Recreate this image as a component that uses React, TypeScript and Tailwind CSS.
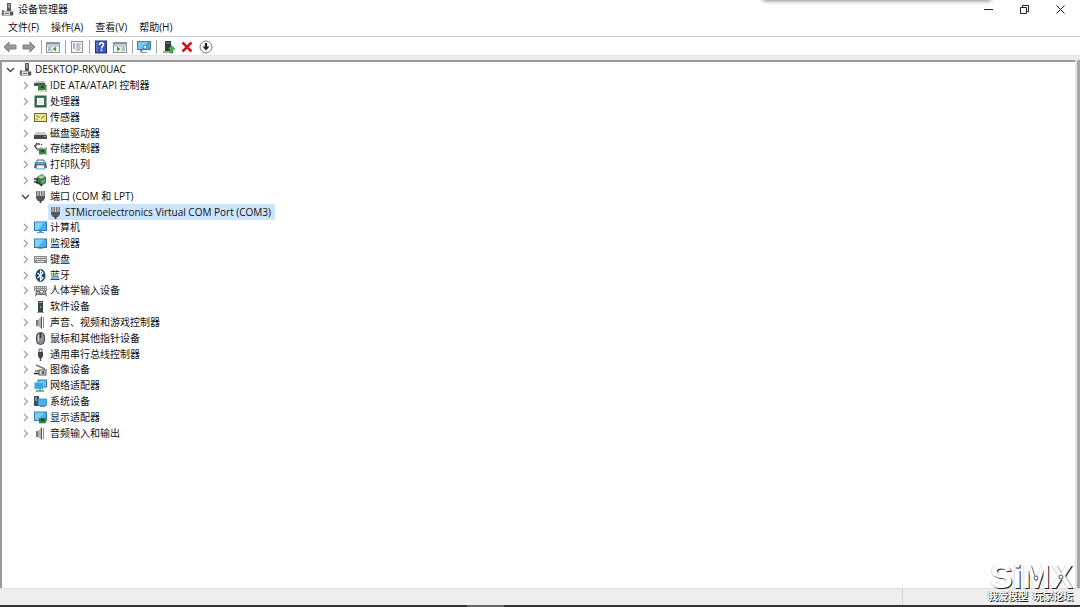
import { useState } from 'react';
import type { ReactNode } from 'react';

interface Device {
  label: string;
  icon: keyof typeof icons;
  level: 0 | 1 | 2;
  open?: boolean;
}

const icons = {
  root: (
    <>
      <rect x="6" y="0" width="4" height="8" fill="#5a5a5a" />
      <rect x="7" y="1" width="2" height="4" fill="#999" />
      <path d="M1 12.500V8.500h11v4z" fill="#e2e2e2" stroke="#999" strokeWidth=".8" />
      <rect x="1" y="7" width="2" height="5" fill="#777" />
      <rect x="9" y="9" width="3" height="3" fill="#555" />
      <path d="M4 10.500h4" stroke="#666" />
    </>
  ),
  ide: (
    <>
      <path d="M2 2h8l2 3H0z" fill="#c2c2c2" />
      <rect x="0" y="4" width="11" height="3" fill="#555" />
      <rect x="4" y="6" width="8" height="5" fill="#2f8b43" />
      <rect x="7" y="7" width="3" height="2" fill="#174b24" />
      <path d="M5 11v2M7 11v2M9 11v2" stroke="#b79a2d" />
      <path d="M12 5v8" stroke="#777" />
    </>
  ),
  cpu: (
    <>
      <rect x="0.500" y="0.500" width="12" height="12" fill="#2c6843" />
      <rect x="2" y="2" width="9" height="9" fill="#456f56" />
      <rect x="3" y="3" width="7" height="7" fill="#fff" />
      <rect x="4" y="4" width="5" height="5" fill="#e8ece9" />
    </>
  ),
  sensor: (
    <>
      <rect x="0.500" y="2.500" width="12" height="8" fill="#f0e69a" stroke="#6f682b" />
      <path d="M2 5h2v1h2M11 5H9v2H7M2 8h2" stroke="#9c9030" fill="none" />
    </>
  ),
  disk: (
    <>
      <path d="M2 5h9l2 3H0z" fill="#c9c9c9" />
      <rect x="0" y="8" width="13" height="4" rx=".5" fill="#4a4a4a" />
      <rect x="10" y="9" width="2" height="1" fill="#5bd26a" />
    </>
  ),
  storage: (
    <>
      <path d="M6 2H3L1 4l2 3h3M2 1l1 1M0 4h2M7 3l1-1" stroke="#4d4d4d" strokeWidth="1.300" fill="none" />
      <path d="M3 7l4-2 5 2v2H3z" fill="#a5a5a5" />
      <rect x="5" y="7" width="7" height="5" fill="#2f8b43" />
      <rect x="7" y="8" width="3" height="2" fill="#17502a" />
      <path d="M6 12v1M8 12v1M12 5v8" stroke="#777" />
    </>
  ),
  printer: (
    <>
      <path d="M3 5V2h7v3" fill="#eee" stroke="#666" />
      <path d="M1 4h11l1 6H0z" fill="#58636a" />
      <rect x="2" y="4" width="9" height="2" fill="#56a7cf" />
      <path d="M3 7h7l1 4H2z" fill="#f8f8f8" stroke="#4c8ca7" strokeWidth=".8" />
    </>
  ),
  battery: (
    <>
      <path d="M3 3l5-3 4 3v6l-5 3-4-3z" fill="#347c40" />
      <path d="M4 3l4-2 3 2-4 2z" fill="#b5cbb8" />
      <path d="M7 7l4-2v3l-4 2z" fill="#60af68" />
      <path d="M0 5h3M0 8h3M3 4v5h2l3 3" stroke="#333" strokeWidth="1.400" fill="none" />
    </>
  ),
  port: (
    <>
      <path d="M2 1h9v7l-2 3H4L2 8z" fill="#7c7c7c" />
      <path d="M4 1v5M6.500 1v5M9 1v5" stroke="#d0d0d0" />
      <path d="M2 6h9v2l-2 3H4L2 8z" fill="#585858" />
      <path d="M6.500 10v3" stroke="#444" strokeWidth="2" />
    </>
  ),
  computer: (
    <>
      <rect x="0.500" y="1" width="12" height="8.500" fill="#48b1ed" stroke="#2a7ebc" />
      <path d="M1 1.500h9L4 9H1z" fill="#82d0fa" />
      <path d="M5 10h3v1h2v1H3v-1h2z" fill="#7297ae" />
    </>
  ),
  monitor: (
    <>
      <rect x="0.500" y="2" width="12" height="8.500" fill="#48b1ed" stroke="#34799f" />
      <path d="M1 2.500h9L4 10H1z" fill="#82d0fa" />
      <path d="M4 11.500h5" stroke="#8babbb" />
    </>
  ),
  keyboard: (
    <>
      <rect x="0" y="3" width="13" height="7" fill="#8a8a8a" />
      <path d="M1 4.500h11M1 6.500h11" stroke="#ececec" strokeDasharray="1.500 .5" />
      <path d="M3 8.500h7" stroke="#ddd" />
    </>
  ),
  bluetooth: (
    <>
      <ellipse cx="6.500" cy="6.500" rx="5" ry="6.500" fill="#164680" />
      <path d="M3.500 4L9 9l-2.500 2.500v-10L9 4 3.500 9" stroke="#fff" strokeWidth="1.100" fill="none" />
    </>
  ),
  hid: (
    <>
      <rect x="0" y="2" width="13" height="5" fill="#8f8f8f" />
      <path d="M1 3.500h11M1 5.500h11" stroke="#e4e4e4" strokeDasharray="1 1" />
      <path d="M1 13l1-6h4l1 2h1l1-2h3l1 6-2-2H3z" fill="#777" />
      <path d="M4 8v2M10 8v2" stroke="#eee" />
    </>
  ),
  software: (
    <>
      <rect x="4" y="1" width="5" height="11" fill="#3f4541" />
      <rect x="5" y="2" width="3" height="1" fill="#b1b8b3" />
      <rect x="6" y="6" width="1" height="2" fill="#68c56e" />
      <path d="M3 12.500h7" stroke="#999" />
    </>
  ),
  speaker: (
    <>
      <path d="M2 4h2v6H2z" fill="#777" />
      <path d="M4 4l4-4v13l-4-3z" fill="#b0b0b0" />
      <path d="M7 1l1-1v13l-1-1z" fill="#555" />
      <path d="M9.500 1v11" stroke="#8f8f8f" />
    </>
  ),
  mouse: (
    <>
      <rect x="2.500" y="0.500" width="8" height="12" rx="4" fill="#8a9199" stroke="#3d4247" />
      <path d="M6.500 1v5" stroke="#333" strokeWidth="1.500" />
      <path d="M4.500 3v6" stroke="#d9dde1" />
    </>
  ),
  usb: (
    <>
      <path d="M5 4V1h3v3" fill="#ddd" stroke="#666" />
      <path d="M4 4h5v4L8 10H5L4 8z" fill="#444" />
      <path d="M6.500 10v3" stroke="#555" strokeWidth="1.500" />
    </>
  ),
  imaging: (
    <>
      <path d="M2 2l9 4M1 8h5" stroke="#777" strokeWidth="1.500" />
      <path d="M0 10.500h6" stroke="#222" strokeWidth="1.500" />
      <rect x="5" y="7" width="7" height="5" fill="#ddd" stroke="#555" />
      <circle cx="9" cy="9.500" r="1.500" fill="#555" />
    </>
  ),
  network: (
    <>
      <rect x="4" y="1" width="8.500" height="7" fill="#64bfee" stroke="#347fa9" />
      <rect x="0.500" y="3.500" width="9" height="6.500" fill="#3ba6e4" stroke="#8dcdf0" strokeWidth=".7" />
      <path d="M2 12h8M6 10v2" stroke="#46a75e" strokeWidth="1.500" />
    </>
  ),
  system: (
    <>
      <rect x="0" y="1" width="5" height="10" fill="#3e4e59" />
      <path d="M1 3h2M1 5h2" stroke="#c4d1d8" />
      <rect x="4" y="4" width="8.500" height="6.500" fill="#48b1ed" stroke="#317fae" strokeWidth=".8" />
      <path d="M6 11.500h5" stroke="#789" />
    </>
  ),
  display: (
    <>
      <rect x="0.500" y="1" width="12" height="8.500" fill="#48b1ed" stroke="#347fa9" />
      <path d="M1 1.500h9L4 9H1z" fill="#7acbf6" />
      <rect x="5" y="7" width="7" height="5" fill="#2f8040" />
      <rect x="7" y="8" width="3" height="2" fill="#173f20" />
      <path d="M6 12v1M8 12v1M10 12v1" stroke="#b69b35" />
    </>
  ),
};

const devices: Device[] = [
  { label: 'DESKTOP-RKV0UAC', icon: 'root', level: 0, open: true },
  { label: 'IDE ATA/ATAPI 控制器', icon: 'ide', level: 1 },
  { label: '处理器', icon: 'cpu', level: 1 },
  { label: '传感器', icon: 'sensor', level: 1 },
  { label: '磁盘驱动器', icon: 'disk', level: 1 },
  { label: '存储控制器', icon: 'storage', level: 1 },
  { label: '打印队列', icon: 'printer', level: 1 },
  { label: '电池', icon: 'battery', level: 1 },
  { label: '端口 (COM 和 LPT)', icon: 'port', level: 1, open: true },
  { label: 'STMicroelectronics Virtual COM Port (COM3)', icon: 'port', level: 2 },
  { label: '计算机', icon: 'computer', level: 1 },
  { label: '监视器', icon: 'monitor', level: 1 },
  { label: '键盘', icon: 'keyboard', level: 1 },
  { label: '蓝牙', icon: 'bluetooth', level: 1 },
  { label: '人体学输入设备', icon: 'hid', level: 1 },
  { label: '软件设备', icon: 'software', level: 1 },
  { label: '声音、视频和游戏控制器', icon: 'speaker', level: 1 },
  { label: '鼠标和其他指针设备', icon: 'mouse', level: 1 },
  { label: '通用串行总线控制器', icon: 'usb', level: 1 },
  { label: '图像设备', icon: 'imaging', level: 1 },
  { label: '网络适配器', icon: 'network', level: 1 },
  { label: '系统设备', icon: 'system', level: 1 },
  { label: '显示适配器', icon: 'display', level: 1 },
  { label: '音频输入和输出', icon: 'speaker', level: 1 },
];

const indents = ['pl-[2px]', 'pl-[17px]', 'pl-[32px]'];

function Icon({ children }: { children: ReactNode }) {
  return (
    <svg viewBox="0 0 13 13" className="size-[13px] shrink-0" aria-hidden="true">
      {children}
    </svg>
  );
}

function DeviceRow({ device, selected, onSelect }: { device: Device; selected: boolean; onSelect: () => void }) {
  return (
    <li
      role="treeitem"
      aria-level={device.level + 1}
      aria-selected={selected}
      className={`flex min-h-0 items-center ${indents[device.level]}`}
    >
      {device.level < 2 ? (
        <button type="button" aria-label={`展开 ${device.label}`} className="flex w-[14px] shrink-0 pl-[2px]">
          <svg viewBox="0 0 9 9" className="size-[9px]" fill="none" aria-hidden="true">
            {device.open ? (
              <path d="M1 3l3.500 3.500L8 3" stroke="#404040" strokeWidth="1.300" />
            ) : (
              <path d="M3 1l3.500 3.500L3 8" stroke="#a0a0a0" strokeWidth="1.200" />
            )}
          </svg>
        </button>
      ) : (
        <span className="w-[14px] shrink-0" />
      )}
      <button
        type="button"
        onClick={onSelect}
        className={`flex h-full items-center gap-[3px] pr-1 pl-px whitespace-nowrap ${selected ? 'bg-[#cce4fc]' : ''}`}
      >
        <Icon>{icons[device.icon]}</Icon>
        <span>{device.label}</span>
      </button>
    </li>
  );
}

function ToolButton({ label, children }: { label: string; children: ReactNode }) {
  return (
    <button type="button" aria-label={label} className="flex h-4 w-[18px] items-center justify-center">
      <svg viewBox="0 0 14 14" className="size-[14px]" fill="none" aria-hidden="true">
        {children}
      </svg>
    </button>
  );
}

function Divider() {
  return (
    <span className="flex w-1 justify-center">
      <span className="h-[14px] w-px bg-[#a5a5a5]" />
    </span>
  );
}

function Toolbar() {
  return (
    <div role="toolbar" className="flex h-[19px] items-center gap-px border-b border-[#e4e4e4] pt-px pl-px">
      <ToolButton label="后退">
        <path d="M1 7l5-5v3h7v4H6v3z" fill="#999" stroke="#7f7f7f" />
      </ToolButton>
      <ToolButton label="前进">
        <path d="M13 7L8 2v3H1v4h7v3z" fill="#999" stroke="#7f7f7f" />
      </ToolButton>
      <Divider />
      <ToolButton label="显示/隐藏控制台树">
        <rect x="0.500" y="2.500" width="13" height="10" fill="#f4f5f5" stroke="#8d979d" />
        <path d="M1 3.500h12" stroke="#8299aa" strokeWidth="2" />
        <path d="M1 6h12M5 6v6" stroke="#a7b0b5" />
        <path d="M2 8h2M2 10h2" stroke="#557fa0" />
        <path d="M10 6.500v5L6.500 9z" fill="#3eaa3b" />
      </ToolButton>
      <Divider />
      <ToolButton label="属性">
        <rect x="1.500" y="1.500" width="11" height="11" fill="#f5f6f7" stroke="#8a9299" />
        <path d="M6 4h5M6 6h4M6 8h5M6 10h4" stroke="#8498aa" />
        <path d="M3 4h2M3 6h2M3 8h2" stroke="#527ba0" />
      </ToolButton>
      <Divider />
      <ToolButton label="帮助">
        <rect x="1.500" y="1" width="11" height="12" fill="#3d57b8" stroke="#27377d" />
        <path d="M3 2v10" stroke="#6f87d9" />
        <path d="M5.500 5c0-3 4-3 4-.5C9.500 6 7.500 6 7.500 8.500M7.500 9.500v1.700" stroke="#fff" strokeWidth="1.500" />
      </ToolButton>
      <ToolButton label="操作窗格">
        <rect x="0.500" y="2.500" width="13" height="10" fill="#f4f5f5" stroke="#8d979d" />
        <path d="M1 3.500h12" stroke="#8299aa" strokeWidth="2" />
        <path d="M1 6h12M9 6v6" stroke="#a7b0b5" />
        <path d="M10 8h2M10 10h2" stroke="#557fa0" />
        <path d="M4 6.500v5L7.500 9z" fill="#3eaa3b" />
      </ToolButton>
      <Divider />
      <ToolButton label="扫描检测硬件改动">
        <rect x="0.500" y="1.500" width="13" height="8" fill="#48a9dc" stroke="#4983a4" />
        <path d="M1 2h10L5 9H1z" fill="#79c9ef" />
        <path d="M4 12.500h6" stroke="#7898aa" />
        <circle cx="8" cy="7" r="2" fill="#c6e8f8" stroke="#5589a5" />
        <path d="M6.500 8.500L3 12" stroke="#597d92" strokeWidth="1.500" />
      </ToolButton>
      <Divider />
      <ToolButton label="更新驱动程序">
        <path d="M4 1h6v10H4z" fill="#333c36" />
        <path d="M5 3h4" stroke="#89948c" />
        <path d="M2 12h7" stroke="#888" strokeWidth="1.500" />
        <path d="M10.500 5.500L14 9h-2v4H9V9H7z" fill="#43b64b" stroke="#27833a" strokeWidth=".6" />
      </ToolButton>
      <ToolButton label="卸载设备">
        <path d="M2.500 2.500l9 9M11.500 2.500l-9 9" stroke="#c91520" strokeWidth="2.500" />
      </ToolButton>
      <ToolButton label="禁用设备">
        <circle cx="7" cy="7" r="6" fill="#fff" stroke="#777" />
        <path d="M7 3v5" stroke="#222" strokeWidth="2.200" />
        <path d="M3.500 6.500h7L7 10.500z" fill="#222" />
      </ToolButton>
    </div>
  );
}

function TitleBar() {
  return (
    <header className="flex h-[18px] items-center justify-between pl-px">
      <div className="flex items-center gap-1">
        <Icon>{icons.root}</Icon>
        <h1>设备管理器</h1>
      </div>
      <div className="flex pr-[2px]">
        <button type="button" aria-label="最小化" className="flex h-4 w-9 items-center justify-center">
          <svg viewBox="0 0 9 9" className="size-[9px]" aria-hidden="true">
            <path d="M0 4.500h9" stroke="#222" />
          </svg>
        </button>
        <button type="button" aria-label="还原" className="flex h-4 w-9 items-center justify-center">
          <svg viewBox="0 0 9 9" className="size-[9px]" fill="none" aria-hidden="true">
            <path d="M.5 2.500h6v6h-6zM2.500 2.500v-2h6v6h-2" stroke="#222" />
          </svg>
        </button>
        <button type="button" aria-label="关闭" className="flex h-4 w-9 items-center justify-center">
          <svg viewBox="0 0 9 9" className="size-[9px]" aria-hidden="true">
            <path d="M.5.500l8 8M8.500.500l-8 8" stroke="#222" />
          </svg>
        </button>
      </div>
    </header>
  );
}

function Watermark() {
  return (
    <div className="absolute right-[7px] bottom-[5px] flex flex-col items-end font-bold text-white">
      <div className="relative font-['Liberation_Sans',sans-serif] text-[34px] leading-[29px] [text-shadow:1px_1px_0_#222,-1px_0_0_#ddd]">
        SiMX
        <svg viewBox="0 0 50 24" className="absolute right-0 bottom-0 h-6 w-[50px]" fill="none" aria-hidden="true">
          <circle cx="13" cy="11" r="2" fill="#fff" stroke="#555" />
          <circle cx="38" cy="10" r="2" fill="#fff" stroke="#555" />
        </svg>
      </div>
      <p className="flex gap-[5px] text-[10px] leading-[11px] [text-shadow:1px_1px_0_#222,-1px_0_0_#999]">
        <span>我爱模型</span>
        <span>玩家论坛</span>
      </p>
    </div>
  );
}

export default function App() {
  const [selected, setSelected] = useState(9);

  return (
    <div className="relative flex h-screen flex-col overflow-hidden bg-white font-['Open_Sans','Noto_Sans_CJK_SC',sans-serif] text-[10px] leading-[15px] text-[#111]">
      <div className="absolute top-[-4px] right-[90px] h-1 w-[226px] shadow-[0_0_4px_1px_#888]" />
      <TitleBar />
      <nav className="flex h-[19px] items-center gap-3 border-b border-[#c8c8c8] pl-2">
        <button type="button">文件(F)</button>
        <button type="button">操作(A)</button>
        <button type="button">查看(V)</button>
        <button type="button">帮助(H)</button>
      </nav>
      <Toolbar />
      <div className="h-1 bg-[#ececec]" />
      <div className="flex min-h-0 flex-1 bg-[#e6e6e6]">
        <main className="flex-1 overflow-hidden border-t-2 border-l-2 border-[#999] bg-white">
          <ul role="tree" aria-label="设备管理器" className="grid h-[379px] auto-rows-fr">
            {devices.map((device, index) => (
              <DeviceRow
                key={device.label}
                device={device}
                selected={selected === index}
                onSelect={() => setSelected(index)}
              />
            ))}
          </ul>
        </main>
        <div className="w-[5px] border-r-[3px] border-[#a8a8a8]" />
      </div>
      <footer className="flex h-[17px] justify-end border-t border-[#dedede] bg-[#eee]">
        <div className="w-[178px] border-l border-[#d4d4d4]" />
      </footer>
      <div className="flex h-[2px] bg-[#333]">
        <div className="flex-[467]" />
        <div className="flex-[37] bg-[#666]" />
        <div className="flex-[576]" />
      </div>
      <Watermark />
    </div>
  );
}
